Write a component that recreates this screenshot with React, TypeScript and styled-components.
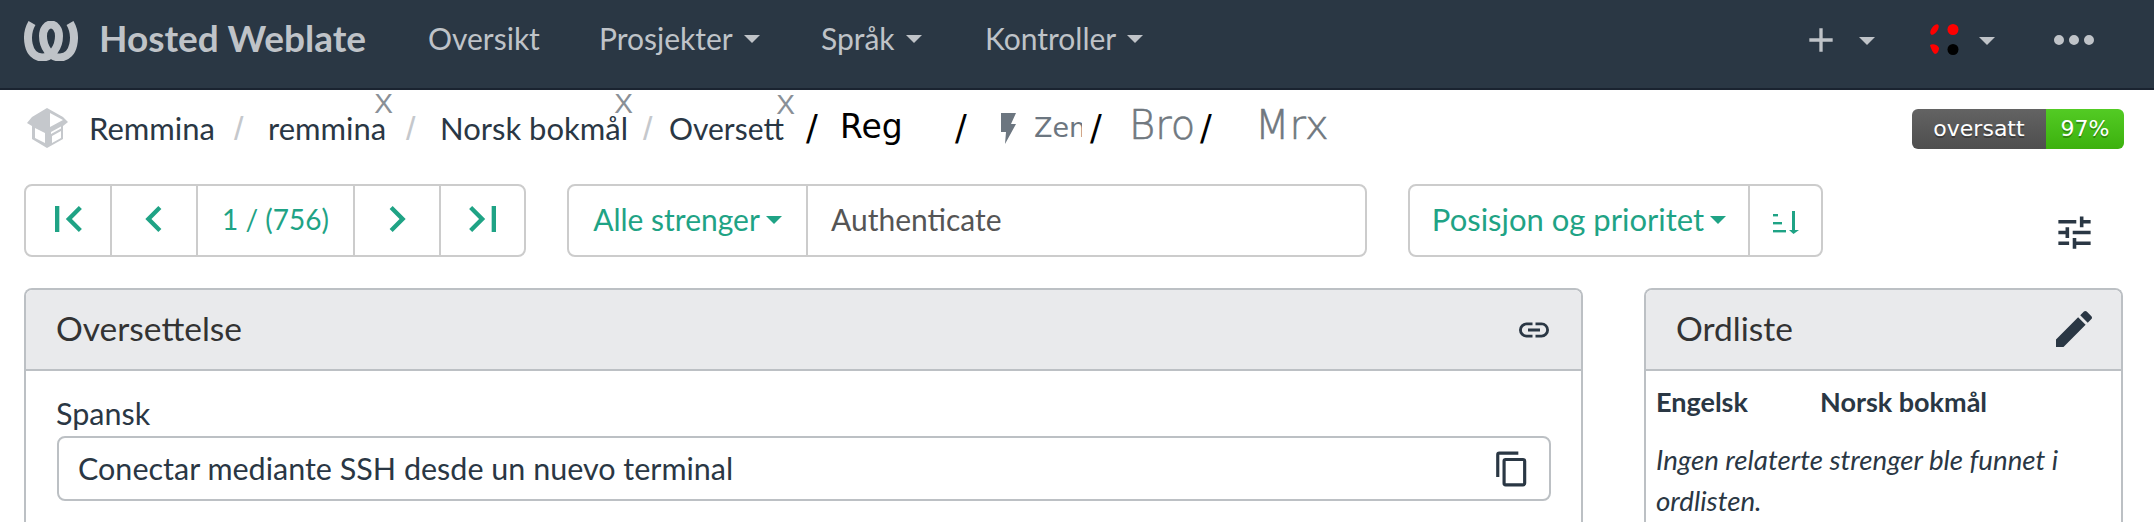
import React from 'react';
import styled, { createGlobalStyle } from 'styled-components';

const Global = createGlobalStyle`
  html, body { margin: 0; padding: 0; background: #fff; height: 522px; overflow: hidden; }
  body { font-family: "Lato", "Noto Sans", sans-serif; font-size: 30px; color: #2a3744; }
`;
const Navbar = styled.header`
  height: 88px; box-sizing: content-box; border-bottom: 2px solid #1a2330; background: #2a3744; color: #bfc3c8;
  display: flex; align-items: center; padding: 0 60px 0 24px;
`;
const NavInner = styled.div`display: flex; align-items: center; flex: 1; height: 82px; margin-bottom: 6px;`;
const Brand = styled.div`display: flex; align-items: center; gap: 21px; font-size: 37px; font-weight: 700; width: 404px; flex: none; line-height: 40px;`;
const BrandText = styled.span`margin-top: -7px;`;
const NavItem = styled.div<{ $w: number }>`
  width: ${p => p.$w}px; flex: none; display: flex; align-items: center; gap: 11px; font-size: 30px; margin-top: -7px;
`;
const Caret = styled.span<{ $color?: string }>`
  display: inline-block; width: 0; height: 0; border-left: 8px solid transparent; border-right: 8px solid transparent;
  border-top: 8px solid ${p => p.$color || '#bfc3c8'}; margin-top: 2px;
`;
const NavRight = styled.div`margin: -2px 0 0 auto; display: flex; align-items: center;`;
const IconWrap = styled.div<{ $w: number }>`display: flex; align-items: center; width: ${p => p.$w}px; flex: none; gap: 19px;`;

const Crumbs = styled.div`height: 76px; padding: 0 30px 0 27px; display: flex; align-items: center;`;
const Crumb = styled.span<{ $w: number; $size?: number }>`
  width: ${p => p.$w}px; flex: none; font-size: ${p => p.$size || 31}px; position: relative; white-space: nowrap;
`;
const CloseX = styled.span<{ $r: number }>`
  position: absolute; right: ${p => p.$r}px; top: -21px; font-size: 28px; color: #8a9097; font-family: "Liberation Sans", sans-serif; line-height: 31px;
`;
const Sep = styled.span<{ $w: number }>`
  width: ${p => p.$w}px; margin-left: 19px; flex: none; color: #c5c8cc; font-size: 34px; font-family: "Liberation Sans", sans-serif;
`;
const BlackSep = styled.span<{ $w: number; $ml?: number }>`
  width: ${p => p.$w}px; margin-left: ${p => p.$ml || 0}px; flex: none; color: #000; font-family: "DejaVu Sans", sans-serif; font-size: 35px;
`;
const BigText = styled.span<{ $w: number }>`
  width: ${p => p.$w}px; flex: none; font-family: "DejaVu Sans", sans-serif; font-size: 33px; color: #000; margin-top: -3px;
`;
const ZenText = styled.span`
  width: 48px; flex: none; overflow: hidden; font-family: "DejaVu Sans", sans-serif; font-size: 27px; color: #6c7680; margin: -2px 8px 0 0; white-space: nowrap;
`;
const ThinText = styled.span<{ $w: number }>`
  width: ${p => p.$w}px; flex: none; font-family: "DejaVu Sans", sans-serif; font-weight: 200; font-size: 40px; color: #70787f; margin-top: -7px;
  -webkit-text-stroke: .6px #70787f;
`;
const Badge = styled.div`
  margin-left: auto; display: flex; height: 40px; width: 212px; border-radius: 6px; overflow: hidden; color: #fff; margin-top: 1px; flex: none;
  font-family: "DejaVu Sans", sans-serif; font-size: 22px; text-shadow: 0 2px 0 rgba(1,1,1,.3);
`;
const BadgeLeft = styled.div`flex: 134px 0 0; display: flex; align-items: center; justify-content: center; background: linear-gradient(#636363, #4e4e4e);`;
const BadgeRight = styled.div`flex: 1; display: flex; align-items: center; justify-content: center; background: linear-gradient(#53cb24, #3cb10e);`;

const Toolbar = styled.div`display: flex; align-items: center; padding: 18px 31px 0 24px; height: 73px; box-sizing: content-box;`;
const Group = styled.div<{ $w: number; $ml?: number }>`
  display: flex; width: ${p => p.$w}px; margin-left: ${p => p.$ml || 0}px; height: 73px; box-sizing: border-box; flex: none;
  border: 2px solid #ccc; border-radius: 8px; color: #1fa385; font-size: 30px;
`;
const Cell = styled.div<{ $w?: number; $size?: number }>`
  display: flex; align-items: center; justify-content: center; gap: 6px; white-space: nowrap; box-sizing: border-box; padding-bottom: 3px;
  ${p => (p.$w ? `width: ${p.$w}px; flex: none;` : 'flex: 1;')}
  ${p => (p.$size ? `font-size: ${p.$size}px;` : '')}
  &:not(:last-child) { border-right: 2px solid #ccc; }
`;
const SearchText = styled.div`flex: 1; display: flex; align-items: center; padding: 0 0 4px 23px; color: #555;`;
const Tune = styled.div`margin: 24px 27px 0 auto; display: flex;`;

const Panels = styled.div`display: flex; padding: 31px 31px 0 24px; gap: 61px;`;
const Panel = styled.section<{ $w: number }>`
  width: ${p => p.$w}px; height: 300px; flex: none; box-sizing: border-box; border: 2px solid #bcc0c4; border-bottom: 0; border-radius: 8px 8px 0 0;
`;
const PanelHead = styled.div<{ $pl: number; $pr: number }>`
  height: 81px; box-sizing: border-box; background: #e9eaec; border-bottom: 2px solid #bcc0c4; border-radius: 6px 6px 0 0;
  display: flex; align-items: center; justify-content: space-between; padding: 0 ${p => p.$pr}px 0 ${p => p.$pl}px; color: #333; font-size: 33.5px;
`;
const HeadText = styled.span`margin-top: -3px;`;
const Body = styled.div`padding: 22px 30px 0 31px; font-size: 30.5px;`;
const Label = styled.div`line-height: 40px; margin: 0 0 3px -1px;`;
const Source = styled.div`
  height: 65px; box-sizing: border-box; border: 2px solid #bcc0c4; border-radius: 8px; display: flex; align-items: center; justify-content: space-between; padding: 0 18px 0 19px;
`;
const SourceText = styled.span`margin-top: -2px;`;
const SideBody = styled.div`padding: 11px 10px;`;
const Heads = styled.div`display: grid; grid-template-columns: 164px 1fr; font-weight: 700; font-size: 27px; line-height: 40px;`;
const Note = styled.div`margin-top: 17px; font-style: italic; line-height: 41px; font-size: 27.7px;`;

const Mdi = ({ d, size, color, style }: { d: string; size: number; color?: string; style?: React.CSSProperties }) => (
  <svg width={size} height={size} viewBox="0 0 24 24" fill={color || 'currentColor'} style={{ display: 'block', flex: 'none', ...style }}><path d={d} /></svg>
);
const P = {
  first: 'M18.41,16.59L13.82,12L18.41,7.41L17,6L11,12L17,18L18.41,16.59M6,6H8V18H6V6Z',
  prev: 'M15.41,16.58L10.83,12L15.41,7.41L14,6L8,12L14,18L15.41,16.58Z',
  next: 'M8.59,16.58L13.17,12L8.59,7.41L10,6L16,12L10,18L8.59,16.58Z',
  last: 'M5.59,7.41L10.18,12L5.59,16.59L7,18L13,12L7,6L5.59,7.41M16,6H18V18H16V6Z',
  tune: 'M3,17V19H9V17H3M3,5V7H13V5H3M13,21V19H21V17H13V15H11V21H13M7,9V11H3V13H7V15H9V9H7M21,13V11H11V13H21M15,9H17V7H21V5H17V3H15V9Z',
  link: 'M3.9,12C3.9,10.29 5.29,8.9 7,8.9H11V7H7A5,5 0 0,0 2,12A5,5 0 0,0 7,17H11V15.1H7C5.29,15.1 3.9,13.71 3.9,12M8,13H16V11H8V13M17,7H13V8.9H17C18.71,8.9 20.1,10.29 20.1,12C20.1,13.71 18.71,15.1 17,15.1H13V17H17A5,5 0 0,0 22,12A5,5 0 0,0 17,7Z',
  pencil: 'M20.71,7.04C21.1,6.65 21.1,6 20.71,5.63L18.37,3.29C18,2.9 17.35,2.9 16.96,3.29L15.12,5.12L18.87,8.87M3,17.25V21H6.75L17.81,9.93L14.06,6.18L3,17.25Z',
  copy: 'M19,21H8V7H19M19,5H8A2,2 0 0,0 6,7V21A2,2 0 0,0 8,23H19A2,2 0 0,0 21,21V7A2,2 0 0,0 19,5M16,1H4A2,2 0 0,0 2,3V17H4V3H16V1Z',
  plus: 'M19,13H13V19H11V13H5V11H11V5H13V11H19V13Z',
  dots: 'M16,12A2,2 0 0,1 18,10A2,2 0 0,1 20,12A2,2 0 0,1 18,14A2,2 0 0,1 16,12M10,12A2,2 0 0,1 12,10A2,2 0 0,1 14,12A2,2 0 0,1 12,14A2,2 0 0,1 10,12M4,12A2,2 0 0,1 6,10A2,2 0 0,1 8,12A2,2 0 0,1 6,14A2,2 0 0,1 4,12Z',
};

const Logo = () => (
  <svg width="54" height="40" viewBox="0 0 54 40" fill="none" stroke="#bfc3c8" strokeWidth="8" style={{ flex: 'none' }}>
    <path d="M8 2C1 14 3 36 18 36.5C28 36.5 35 26 35 15C35 8 31 3.5 27 3.5C23 3.5 19 8 19 15C19 26 26 36.5 36 36.5C51 36 53 14 46 2" />
  </svg>
);
const BoxIcon = () => (
  <svg width="42" height="40" viewBox="0 0 42 40" style={{ flex: 'none', marginRight: 20 }}>
    <path d="M20 0L36 9L41 14L36 18V31L20 40L5 31V18L0 15L5 9Z" fill="#c5c8cc" />
    <path d="M8 20L18 25V35L8 30ZM23 5L36 12L23 19ZM25 28L34 23V30L25 35ZM24 24L34 18.5V20.5L24 26Z" fill="#fff" />
  </svg>
);
const Bolt = () => (
  <svg width="15" height="31" viewBox="0 0 15 31" fill="#6c7680" style={{ flex: 'none', margin: '0 18px 0 0' }}>
    <path d="M0 0H15L10 11H15L4 31L5 19H0Z" />
  </svg>
);
const Avatar = () => (
  <svg width="30" height="32" viewBox="0 0 30 32" style={{ flex: 'none' }}>
    <ellipse cx="4.5" cy="5.5" rx="3" ry="6" transform="rotate(35 4.5 5.5)" fill="#f00" />
    <circle cx="23" cy="5.5" r="5.5" fill="#f00" />
    <path d="M0 21C3 19 8 21 9 24C9 27 7 30 5 30C3 29 1 25 0 21Z" fill="#f00" />
    <circle cx="23" cy="25.5" r="5.5" fill="#000" />
  </svg>
);
const SortIcon = () => (
  <svg width="26" height="23" viewBox="0 0 26 23" fill="#1fa385" style={{ display: 'block', marginTop: 6 }}>
    <rect x="0" y="3" width="5" height="2.4" />
    <rect x="0" y="11" width="9" height="2.4" />
    <rect x="0" y="19" width="13" height="2.4" />
    <path d="M19 0H22V19H26L20.5 23L16 19H19Z" />
  </svg>
);

export default function App() {
  return (
    <>
      <Global />
      <Navbar>
        <NavInner>
          <Brand><Logo /><BrandText>Hosted Weblate</BrandText></Brand>
          <NavItem $w={171}>Oversikt</NavItem>
          <NavItem $w={222}>Prosjekter <Caret /></NavItem>
          <NavItem $w={164}>Språk <Caret /></NavItem>
          <NavItem $w={200}>Kontroller <Caret /></NavItem>
          <NavRight>
            <IconWrap $w={121}><Mdi d={P.plus} size={40} style={{ margin: '0 -1px 0 -8px' }} /><Caret /></IconWrap>
            <IconWrap $w={124}><Avatar /><Caret /></IconWrap>
            <Mdi d={P.dots} size={60} style={{ margin: '0 -10px' }} />
          </NavRight>
        </NavInner>
      </Navbar>
      <Crumbs>
        <BoxIcon />
        <Crumb $w={126}>Remmina</Crumb>
        <Sep $w={34}>/</Sep>
        <Crumb $w={119}>remmina<CloseX $r={-6}>X</CloseX></Crumb>
        <Sep $w={34}>/</Sep>
        <Crumb $w={184}>Norsk bokmål<CloseX $r={-9}>X</CloseX></Crumb>
        <Sep $w={26}>/</Sep>
        <Crumb $w={113} $size={30}>Oversett<CloseX $r={-13}>X</CloseX></Crumb>
        <BlackSep $w={34} $ml={24}>/</BlackSep>
        <BigText $w={115}>Reg</BigText>
        <BlackSep $w={46}>/</BlackSep>
        <Bolt />
        <ZenText>Zen</ZenText>
        <BlackSep $w={39}>/</BlackSep>
        <ThinText $w={71}>Bro</ThinText>
        <BlackSep $w={55}>/</BlackSep>
        <ThinText $w={80}>Mrx</ThinText>
        <Badge><BadgeLeft>oversatt</BadgeLeft><BadgeRight>97%</BadgeRight></Badge>
      </Crumbs>
      <Toolbar>
        <Group $w={502}>
          <Cell $w={86}><Mdi d={P.first} size={52} /></Cell>
          <Cell $w={86}><Mdi d={P.prev} size={52} /></Cell>
          <Cell $w={157} $size={28}>1 / (756)</Cell>
          <Cell $w={86}><Mdi d={P.next} size={52} /></Cell>
          <Cell><Mdi d={P.last} size={52} /></Cell>
        </Group>
        <Group $w={800} $ml={41}>
          <Cell $w={239}>Alle strenger <Caret $color="#1fa385" /></Cell>
          <SearchText>Authenticate</SearchText>
        </Group>
        <Group $w={415} $ml={41}>
          <Cell $w={340} $size={31}>Posisjon og prioritet <Caret $color="#1fa385" /></Cell>
          <Cell><SortIcon /></Cell>
        </Group>
        <Tune><Mdi d={P.tune} size={43} color="#2a3744" /></Tune>
      </Toolbar>
      <Panels>
        <Panel $w={1559}>
          <PanelHead $pl={30} $pr={29}><HeadText>Oversettelse</HeadText> <Mdi d={P.link} size={36} color="#2a3744" /></PanelHead>
          <Body>
            <Label>Spansk</Label>
            <Source><SourceText>Conectar mediante SSH desde un nuevo terminal</SourceText> <Mdi d={P.copy} size={38} /></Source>
          </Body>
        </Panel>
        <Panel $w={479}>
          <PanelHead $pl={30} $pr={23}><HeadText>Ordliste</HeadText> <Mdi d={P.pencil} size={48} color="#2a3744" style={{ marginTop: -2 }} /></PanelHead>
          <SideBody>
            <Heads><span>Engelsk</span><span>Norsk bokmål</span></Heads>
            <Note>Ingen relaterte strenger ble funnet i ordlisten.</Note>
          </SideBody>
        </Panel>
      </Panels>
    </>
  );
}
